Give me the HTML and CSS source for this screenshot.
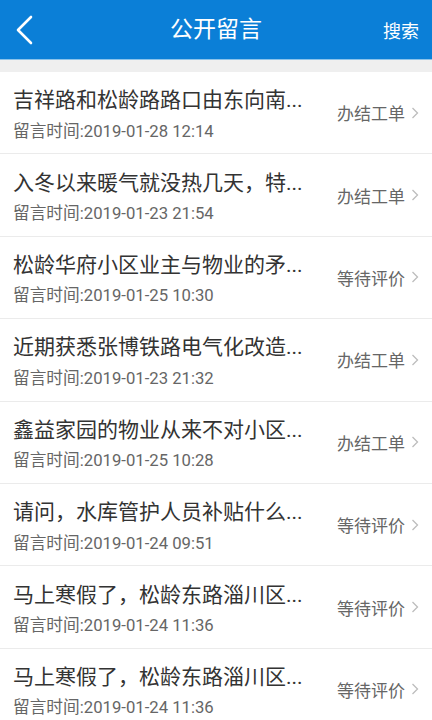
FILE: index.html
```html
<!DOCTYPE html>
<html lang="zh-CN">
<head>
    <meta charset="UTF-8">
    <meta name="viewport" content="width=device-width, initial-scale=1.0">
    <title>公开留言</title>
    <link rel="stylesheet" href="styles.css">
</head>
<body>
    <div class="header">
        <svg class="back" width="20" height="30" viewBox="0 0 20 30">
            <polyline points="16,2 3,15 16,28" fill="none" stroke="#fff" stroke-width="2.6" stroke-linecap="round" stroke-linejoin="round"/>
        </svg>
        <h1>公开留言</h1>
        <span class="search">搜索</span>
    </div>
    <div class="gap"></div>
    <ul class="list">
        <li class="item">
            <div class="info">
                <p class="title">吉祥路和松龄路路口由东向南...</p>
                <p class="date">留言时间:2019-01-28 12:14</p>
            </div>
            <span class="status">办结工单</span>
            <svg class="arrow" width="8" height="12" viewBox="0 0 8 12"><polyline points="1.5,1 6.5,6 1.5,11" fill="none" stroke="#bdbdbd" stroke-width="1.3"/></svg>
        </li>
        <li class="item">
            <div class="info">
                <p class="title">入冬以来暖气就没热几天，特...</p>
                <p class="date">留言时间:2019-01-23 21:54</p>
            </div>
            <span class="status">办结工单</span>
            <svg class="arrow" width="8" height="12" viewBox="0 0 8 12"><polyline points="1.5,1 6.5,6 1.5,11" fill="none" stroke="#bdbdbd" stroke-width="1.3"/></svg>
        </li>
        <li class="item">
            <div class="info">
                <p class="title">松龄华府小区业主与物业的矛...</p>
                <p class="date">留言时间:2019-01-25 10:30</p>
            </div>
            <span class="status">等待评价</span>
            <svg class="arrow" width="8" height="12" viewBox="0 0 8 12"><polyline points="1.5,1 6.5,6 1.5,11" fill="none" stroke="#bdbdbd" stroke-width="1.3"/></svg>
        </li>
        <li class="item">
            <div class="info">
                <p class="title">近期获悉张博铁路电气化改造...</p>
                <p class="date">留言时间:2019-01-23 21:32</p>
            </div>
            <span class="status">办结工单</span>
            <svg class="arrow" width="8" height="12" viewBox="0 0 8 12"><polyline points="1.5,1 6.5,6 1.5,11" fill="none" stroke="#bdbdbd" stroke-width="1.3"/></svg>
        </li>
        <li class="item">
            <div class="info">
                <p class="title">鑫益家园的物业从来不对小区...</p>
                <p class="date">留言时间:2019-01-25 10:28</p>
            </div>
            <span class="status">办结工单</span>
            <svg class="arrow" width="8" height="12" viewBox="0 0 8 12"><polyline points="1.5,1 6.5,6 1.5,11" fill="none" stroke="#bdbdbd" stroke-width="1.3"/></svg>
        </li>
        <li class="item">
            <div class="info">
                <p class="title">请问，水库管护人员补贴什么...</p>
                <p class="date">留言时间:2019-01-24 09:51</p>
            </div>
            <span class="status">等待评价</span>
            <svg class="arrow" width="8" height="12" viewBox="0 0 8 12"><polyline points="1.5,1 6.5,6 1.5,11" fill="none" stroke="#bdbdbd" stroke-width="1.3"/></svg>
        </li>
        <li class="item">
            <div class="info">
                <p class="title">马上寒假了，松龄东路淄川区...</p>
                <p class="date">留言时间:2019-01-24 11:36</p>
            </div>
            <span class="status">等待评价</span>
            <svg class="arrow" width="8" height="12" viewBox="0 0 8 12"><polyline points="1.5,1 6.5,6 1.5,11" fill="none" stroke="#bdbdbd" stroke-width="1.3"/></svg>
        </li>
        <li class="item">
            <div class="info">
                <p class="title">马上寒假了，松龄东路淄川区...</p>
                <p class="date">留言时间:2019-01-24 11:36</p>
            </div>
            <span class="status">等待评价</span>
            <svg class="arrow" width="8" height="12" viewBox="0 0 8 12"><polyline points="1.5,1 6.5,6 1.5,11" fill="none" stroke="#bdbdbd" stroke-width="1.3"/></svg>
        </li>
    </ul>
</body>
</html>
```

FILE: styles.css
```css
body {
    margin: 0;
    font-family: Roboto, "Noto Sans CJK SC", sans-serif;
    background: #fff;
    overflow: hidden;
}
.header {
    height: 59px;
    background: #0b7fd7;
    border-bottom: 1px solid #8cc3ea;
    display: flex;
    align-items: center;
    justify-content: space-between;
    padding: 0 13px 0 15px;
    color: #fff;
}
.header h1 {
    margin: 0;
    font-size: 23px;
    font-weight: normal;
    position: absolute;
    left: 0;
    right: 0;
    top: 0;
    height: 59px;
    line-height: 59px;
    text-align: center;
    pointer-events: none;
}
.back {
    display: block;
}
.search {
    font-size: 18px;
}
.gap {
    height: 12px;
    background: #efefef;
}
.list {
    list-style: none;
    margin: 0;
    padding: 0;
}
.item {
    height: 81.4px;
    box-sizing: content-box;
    border-bottom: 1px solid #ebebeb;
    display: flex;
    align-items: center;
    padding: 0 13px;
}
.info {
    flex: 1;
    padding-top: 3.5px;
}
.title {
    margin: 0;
    font-size: 21px;
    line-height: 26px;
    color: #333;
    white-space: nowrap;
}
.date {
    margin: 8.5px 0 0;
    font-size: 16.7px;
    line-height: 20px;
    color: #666;
}
.status {
    font-size: 17px;
    color: #666;
    margin-right: 6px;
}
.arrow {
    display: block;
}
```
